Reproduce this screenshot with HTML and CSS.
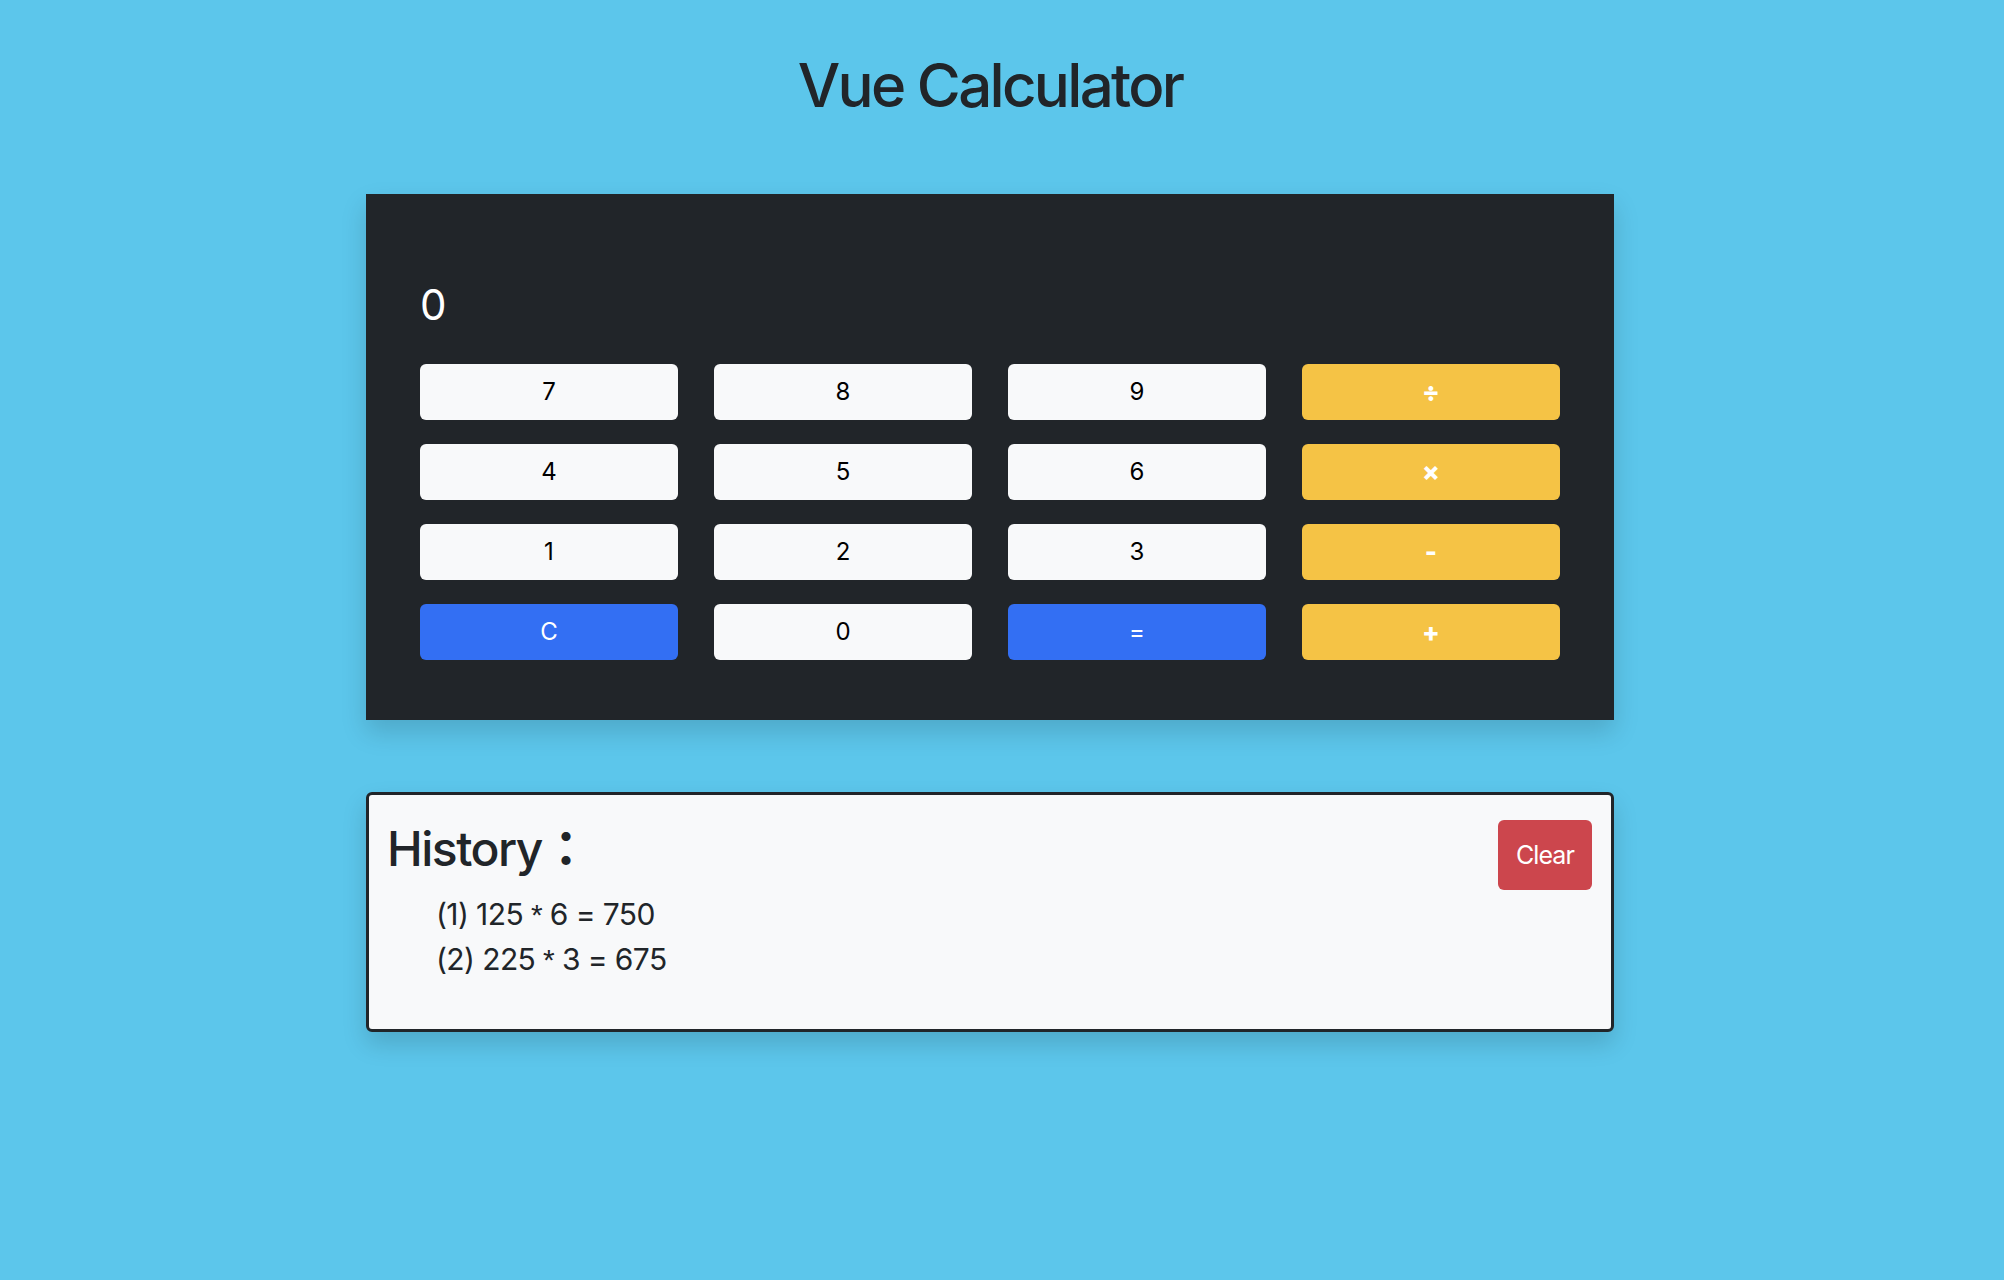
FILE: index.html
```html
<!DOCTYPE html>
<html lang="en">
<head>
<meta charset="utf-8">
<title>Vue Calculator</title>
<link rel="stylesheet" href="styles.css">
</head>
<body>
<div class="app">
  <h1 class="title">Vue Calculator</h1>

  <div class="calculator">
    <div class="display">0</div>
    <div class="keys">
      <button class="key key-light">7</button>
      <button class="key key-light">8</button>
      <button class="key key-light">9</button>
      <button class="key key-op">÷</button>
      <button class="key key-light">4</button>
      <button class="key key-light">5</button>
      <button class="key key-light">6</button>
      <button class="key key-op">×</button>
      <button class="key key-light">1</button>
      <button class="key key-light">2</button>
      <button class="key key-light">3</button>
      <button class="key key-op">-</button>
      <button class="key key-blue">C</button>
      <button class="key key-light">0</button>
      <button class="key key-blue">=</button>
      <button class="key key-op">+</button>
    </div>
  </div>

  <div class="history">
    <div class="history-head">
      <h2 class="history-title">History<span class="fw-colon">：</span></h2>
      <button class="clear-btn">Clear</button>
    </div>
    <ul class="history-list">
      <li>(1) 125 <span class="ast">*</span> 6 = 750</li>
      <li>(2) 225 <span class="ast">*</span> 3 = 675</li>
    </ul>
  </div>
</div>
</body>
</html>
```

FILE: styles.css
```css
html, body {
  margin: 0;
  padding: 0;
}

body {
  background: #5cc6eb;
  font-family: Inter, "Noto Sans", "Noto Sans CJK JP", sans-serif;
  color: #212529;
  padding-right: 24px;
  min-height: 1280px;
  box-sizing: border-box;
}

.app {
  width: 1248px;
  margin: 0 auto;
}

.title {
  margin: 0;
  padding-top: 49px;
  font-size: 60px;
  line-height: 72px;
  font-weight: 500;
  text-align: center;
  letter-spacing: -2.7px;
  color: #212529;
}

.calculator {
  margin-top: 73px;
  background: #212529;
  padding: 86px 54px 60px;
  box-shadow: 0 12px 24px rgba(0, 0, 0, 0.15);
}

.display {
  color: #ffffff;
  font-size: 42px;
  line-height: 50px;
  margin-bottom: 34px;
}

.keys {
  display: grid;
  grid-template-columns: repeat(4, 1fr);
  column-gap: 36px;
  row-gap: 24px;
}

.key {
  height: 56px;
  border: none;
  border-radius: 6px;
  font-family: Inter, "Noto Sans", sans-serif;
  font-size: 24px;
  line-height: 1;
  padding: 0;
}

.key-light {
  background: #f8f9fa;
  color: #000000;
}

.key-op {
  background: #f5c345;
  color: #ffffff;
  font-weight: 800;
  font-size: 26px;
}

.key-blue {
  background: #336ff3;
  color: #ffffff;
}

.history {
  margin-top: 72px;
  background: #f8f9fa;
  border: 3px solid #212529;
  border-radius: 6px;
  padding: 25px 19px 23px 18px;
  box-shadow: 0 12px 24px rgba(0, 0, 0, 0.15);
}

.history-head {
  display: flex;
  justify-content: space-between;
  align-items: flex-start;
}

.history-title {
  margin: 0;
  height: 58px;
  font-size: 48px;
  line-height: 57.6px;
  font-weight: 500;
  letter-spacing: -1.5px;
}

.fw-colon {
  font-family: "Noto Sans CJK JP", sans-serif;
  font-weight: 700;
  letter-spacing: 0;
  line-height: 1;
}

.clear-btn {
  height: 70px;
  padding: 0 18px;
  border: none;
  border-radius: 6px;
  background: #cc464d;
  color: #ffffff;
  font-family: Inter, "Noto Sans", sans-serif;
  font-size: 25px;
  letter-spacing: -0.9px;
}

.history-list {
  list-style: none;
  margin: 0 0 24px;
  padding-left: 49px;
  padding-top: 2px;
  font-size: 30px;
  line-height: 45px;
  letter-spacing: -0.6px;
}

.ast {
  font-family: "Liberation Sans", Arial, sans-serif;
}
```
